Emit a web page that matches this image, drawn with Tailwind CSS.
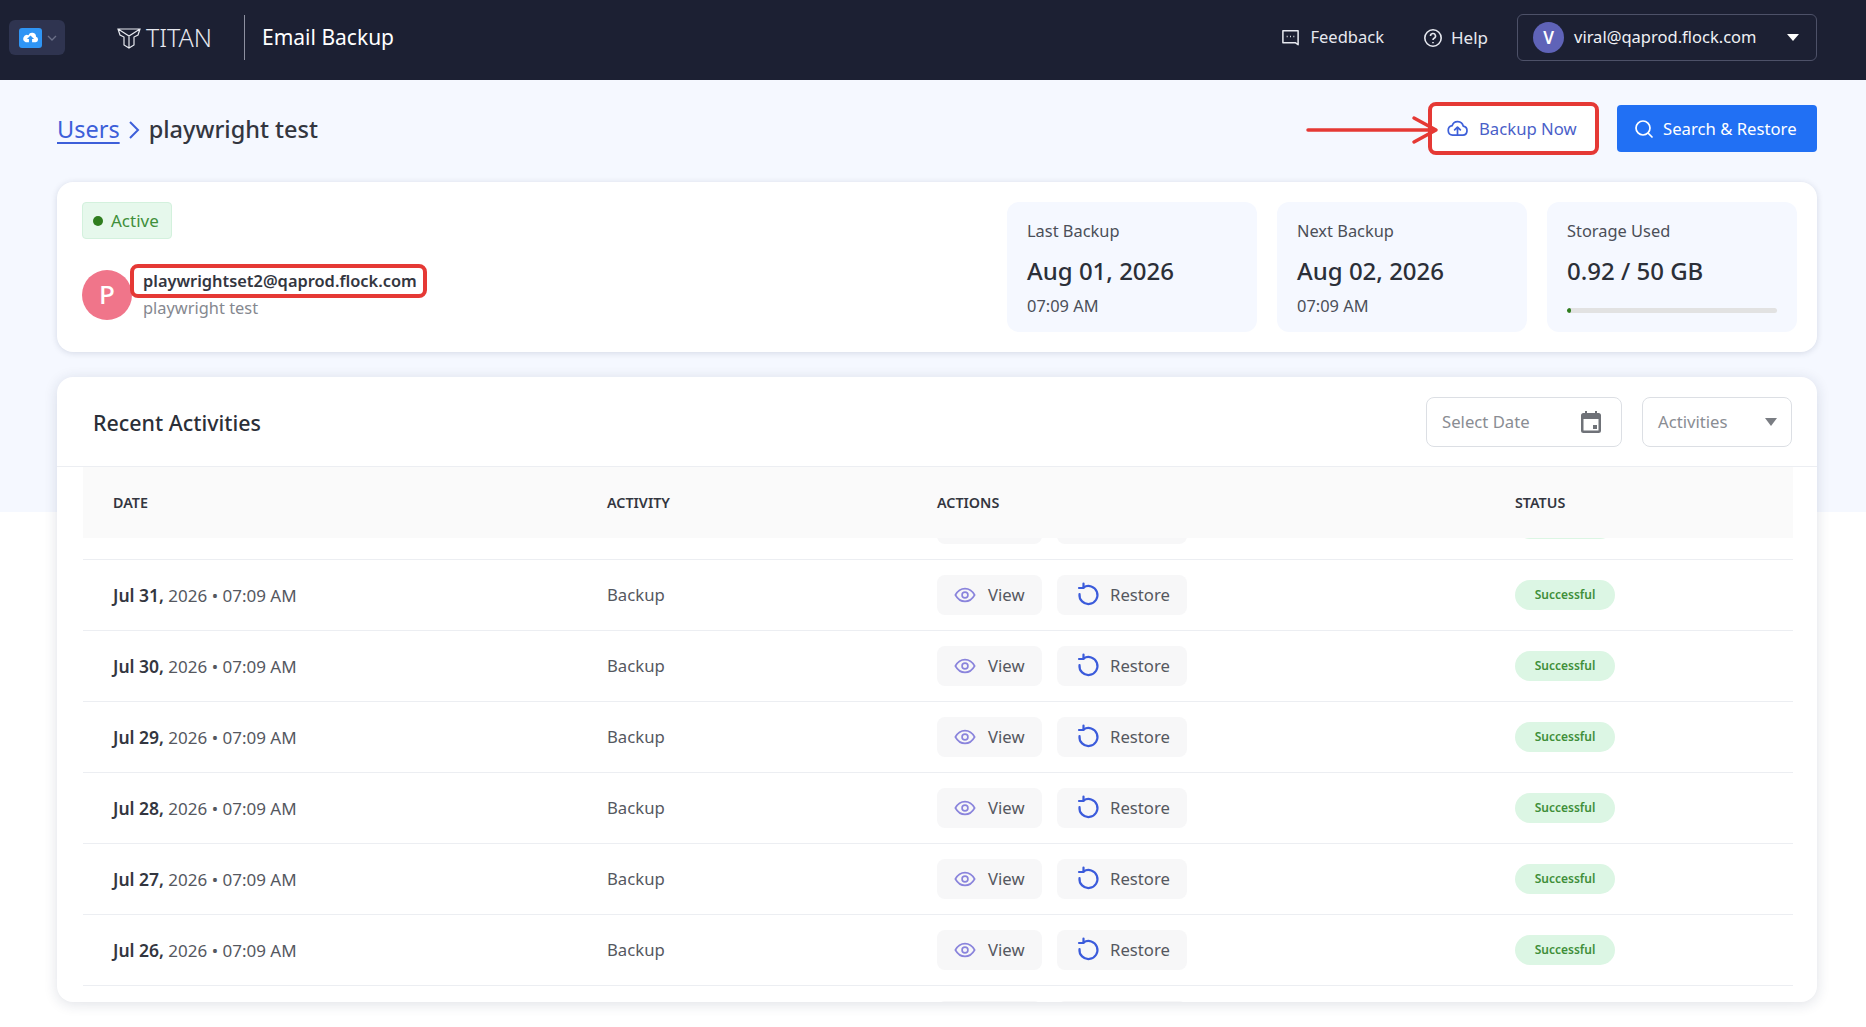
<!DOCTYPE html>
<html lang="en">
<head>
  <meta charset="UTF-8" />
  <title>Email Backup</title>
  <script src="https://cdn.jsdelivr.net/npm/@tailwindcss/browser@4"></script>
</head>
<body class="bg-white text-[#2b2f38] font-['Noto_Sans','Liberation_Sans',sans-serif] overflow-hidden">

  <!-- Header -->
  <header class="h-20 bg-[#1c2033] flex items-center pl-[9px] pr-[49px] pb-[5px] text-white">
    <div class="w-14 h-[35px] rounded-md bg-[#2f3450] flex items-center pl-2.5 gap-1">
      <div class="w-[23px] h-5 rounded-[3px] bg-[#2f95f5] flex items-center justify-center">
        <svg class="w-[19px] h-[19px]" viewBox="0 0 24 24" fill="#fff"><path d="M19 11a5 5 0 0 0-9.600-2A4.500 4.500 0 0 0 6 18h4v-4H7.500L12 9.500l4.500 4.500H14v4h4.500A3.600 3.600 0 0 0 19 11z"/></svg>
      </div>
      <svg class="w-3 h-3 text-[#6b7088]" viewBox="0 0 12 12" fill="none" stroke="currentColor" stroke-width="1.300"><path d="M2 4l4 4 4-4"/></svg>
    </div>
    <div class="ml-[52px] flex items-center gap-[5px]">
      <svg class="w-6 h-6 text-[#e6e8ef]" viewBox="0 0 24 24" fill="none" stroke="currentColor" stroke-width="1.200"><path d="M1 3h22l-2 6-4 2v8l-5 3-5-3v-8L3 9zM1 3l11 7 11-7M12 10v12"/></svg>
      <span class="text-[25px] font-light text-[#e6e8ef] leading-none">TITAN</span>
    </div>
    <div class="ml-8 w-px h-[45px] bg-[#8d90a0]"></div>
    <div class="ml-[17px] text-[21px] leading-none">Email Backup</div>

    <div class="ml-auto flex items-center text-[16.5px]">
      <svg class="w-[19px] h-[19px] mr-[11px]" viewBox="0 0 20 20" fill="none" stroke="#e6e8ef" stroke-width="1.600"><path d="M2 3h16v12.500l0 2-3-2H2z" stroke-linejoin="round"/><path d="M6 9h1M9.500 9h1M13 9h1"/></svg>
      <span class="text-[#e6e8ef]">Feedback</span>
      <svg class="w-5 h-5 ml-[39px] mr-[8px]" viewBox="0 0 20 20" fill="none" stroke="#e6e8ef" stroke-width="1.600"><circle cx="10" cy="10" r="8.200"/><path d="M7.500 8a2.500 2.500 0 1 1 3.600 2.200c-.8.400-1.100.9-1.100 1.800M10 14v1.200"/></svg>
      <span class="text-[#e6e8ef] text-[17px]">Help</span>
      <div class="ml-[29px] w-[300px] h-[47px] rounded-md border border-[#4d5168] flex items-center pl-[15px]">
        <div class="w-[31px] h-[31px] rounded-full bg-[#5f63b8] flex items-center justify-center font-semibold text-[17px]">V</div>
        <span class="ml-[10px] text-[#f0f1f5]">viral@qaprod.flock.com</span>
        <div class="ml-auto mr-[17px] w-0 h-0 border-x-[6px] border-x-transparent border-t-[7px] border-t-white"></div>
      </div>
    </div>
  </header>

  <!-- Main -->
  <main class="h-[947px] pl-[57px] pr-[49px] bg-[linear-gradient(#f5f8ff_432px,#ffffff_432px)]">

    <div class="pt-[25px] h-[102px] flex items-start">
      <div class="h-[49px] flex items-center text-[23.5px] leading-none">
        <a href="#" class="text-[#3d5fd9] underline underline-offset-4">Users</a>
        <svg class="w-3 h-5 ml-2 mr-[9px]" viewBox="0 0 12 20" fill="none" stroke="#3d5fd9" stroke-width="2"><path d="M2 2l8 8-8 8"/></svg>
        <span class="font-medium text-[#33363f]">playwright test</span>
      </div>
      <div class="ml-auto flex items-center gap-[21px] text-[16.7px]">
        <div class="relative">
          <svg class="absolute top-[10px] left-[-126px] w-[135px] h-[30px]" viewBox="0 0 135 30" fill="none" stroke="#e53935" stroke-width="3.500" stroke-linecap="round" stroke-linejoin="round"><path d="M3 15h127M109 3l22 12-22 12"/></svg>
          <button class="w-[165px] h-[47px] bg-white rounded-md flex items-center pl-[15px] gap-2.5 text-[#4a5fc9]">
            <svg class="w-[23px] h-[23px]" viewBox="0 0 24 24" fill="none" stroke="#3d5fd9" stroke-width="1.800" stroke-linecap="round" stroke-linejoin="round"><path d="M7 19a5 5 0 0 1-.6-9.900A6 6 0 0 1 18 9.500a4.800 4.800 0 0 1-.5 9.500H7z"/><path d="M12 18v-7M9 13.500l3-3 3 3"/></svg>
            Backup Now
          </button>
          <div class="absolute -inset-[3px] rounded-lg border-4 border-[#e53935]"></div>
        </div>
        <button class="w-[200px] h-[47px] bg-[#2170f4] rounded-[4px] text-white flex items-center pl-[17px] gap-[9px]">
          <svg class="w-5 h-5" viewBox="0 0 20 20" fill="none" stroke="#fff" stroke-width="1.700" stroke-linecap="round"><circle cx="9" cy="9" r="7"/><path d="M14.500 14.500L18 18"/></svg>
          Search &amp; Restore
        </button>
      </div>
    </div>

    <!-- Account card -->
    <section class="h-[170px] bg-white rounded-2xl shadow-[0_1px_6px_rgba(30,40,80,0.15)] px-5 flex items-center">
      <div class="flex-1 pl-[5px] self-start pt-5">
        <div class="w-[90px] h-[37px] rounded-[4px] bg-[#e6f8ec] border border-[#d3f1dd] flex items-center pl-[10px] gap-[8px] text-[17px] text-[#3f8f3a]">
          <span class="w-[10px] h-[10px] rounded-full bg-[#2f7d1e]"></span>Active
        </div>
        <div class="mt-[30px] flex items-center">
          <div class="w-[50px] h-[50px] rounded-full bg-[#f0758a] text-white flex items-center justify-center text-[26px] font-medium">P</div>
          <div class="ml-[11px] relative">
            <div class="relative text-[16.4px] font-semibold leading-6 text-[#33363f]">playwrightset2@qaprod.flock.com
              <div class="absolute -left-[13px] -right-[10px] -top-[5px] -bottom-[5px] rounded-lg border-4 border-[#e53935]"></div>
            </div>
            <div class="text-[16.4px] leading-6 mt-[3px] text-[#85888f]">playwright test</div>
          </div>
        </div>
      </div>
      <div class="flex gap-5">
        <div class="w-[250px] h-[130px] rounded-xl bg-[#f5f8ff] px-5 pt-[17px]">
          <div class="text-[16.4px] leading-6 text-[#4b4f58]">Last Backup</div>
          <div class="mt-[12px] text-[24px] leading-8 font-medium">Aug 01, 2026</div>
          <div class="mt-[7px] text-[16.4px] leading-6 text-[#4b4f58]">07:09 AM</div>
        </div>
        <div class="w-[250px] h-[130px] rounded-xl bg-[#f5f8ff] px-5 pt-[17px]">
          <div class="text-[16.4px] leading-6 text-[#4b4f58]">Next Backup</div>
          <div class="mt-[12px] text-[24px] leading-8 font-medium">Aug 02, 2026</div>
          <div class="mt-[7px] text-[16.4px] leading-6 text-[#4b4f58]">07:09 AM</div>
        </div>
        <div class="w-[250px] h-[130px] rounded-xl bg-[#f5f8ff] px-5 pt-[17px]">
          <div class="text-[16.4px] leading-6 text-[#4b4f58]">Storage Used</div>
          <div class="mt-[12px] text-[24px] leading-8 font-medium">0.92 / 50 GB</div>
          <div class="mt-[21px] h-[5px] rounded-full bg-[#e2e2e2] overflow-hidden">
            <div class="h-full rounded-full bg-[#2f7d1e]" style="width: 2%"></div>
          </div>
        </div>
      </div>
    </section>

    <!-- Recent activities -->
    <section class="mt-[25px] h-[625px] bg-white rounded-2xl shadow-[0_2px_14px_rgba(30,40,80,0.14)] overflow-hidden flex flex-col">
      <div class="h-[90px] shrink-0 pl-9 pr-[25px] flex items-center border-b border-[#eceef2]">
        <h2 class="pt-[3px] text-[21.4px] font-medium text-[#2b2f38]">Recent Activities</h2>
        <div class="ml-auto w-[196px] h-[50px] rounded-lg border border-[#dcdfe4] flex items-center pl-[15px] pr-[19px] text-[16.7px] text-[#8a8d93]">
          Select Date
          <svg class="ml-auto w-[22px] h-[24px]" viewBox="0 0 22 24" fill="#6f7278"><path d="M5 1h2v2h8V1h2v2h1.500A2.500 2.500 0 0 1 21 5.500v15a2.500 2.500 0 0 1-2.500 2.500h-15A2.500 2.500 0 0 1 1 20.500v-15A2.500 2.500 0 0 1 3.500 3H5zM3.500 9v11.500h15V9zM13 15h4v4h-4z" fill-rule="evenodd"/></svg>
        </div>
        <div class="ml-[20px] w-[150px] h-[50px] rounded-lg border border-[#dcdfe4] flex items-center pl-[15px] pr-[14px] text-[16.7px] text-[#8a8d93]">
          Activities
          <div class="ml-auto w-0 h-0 border-x-[6px] border-x-transparent border-t-[8px] border-t-[#7a7d83]"></div>
        </div>
      </div>

      <div class="ml-[26px] mr-6 h-[71px] shrink-0 bg-[#fafafa] pl-[30px] grid grid-cols-[494px_330px_578px_1fr] pt-[26px] text-[14.3px] font-semibold leading-5 uppercase text-[#33363f] relative z-10">
        <div>Date</div><div>Activity</div><div>Actions</div><div>Status</div>
      </div>

      <div id="rows" class="ml-[26px] mr-6 flex-1 overflow-hidden"></div>
    </section>
  </main>

  <script>
    const dates = ["Aug 01", "Jul 31", "Jul 30", "Jul 29", "Jul 28", "Jul 27", "Jul 26", "Jul 25"];

    document.getElementById("rows").innerHTML = dates.map((d, i) => `
      <div class="h-[71px] border-b border-[#eceef2] pl-[30px] grid grid-cols-[494px_330px_578px_1fr] items-center text-[16.7px] text-[#55585f] ${i === 0 ? "-mt-[49px]" : ""}">
        <div><b class="font-semibold text-[17.5px] text-[#33363f]">${d},</b> <span class="text-[17px]">2026 • 07:09 AM</span></div>
        <div>Backup</div>
        <div class="flex gap-[15px]">
          <div class="w-[105px] h-10 rounded-lg bg-[#f7f7f8] flex items-center pl-[17px] gap-[12px]">
            <svg class="w-[22px] h-[22px]" viewBox="0 0 24 24" fill="none" stroke="#8a84dc" stroke-width="1.800"><path d="M1.500 12C4 7.500 7.800 5 12 5s8 2.500 10.500 7c-2.500 4.500-6.300 7-10.500 7s-8-2.500-10.500-7z"/><circle cx="12" cy="12" r="3.200"/></svg>
            View
          </div>
          <div class="w-[130px] h-10 rounded-lg bg-[#f7f7f8] flex items-center pl-[19px] gap-[10px]">
            <svg class="w-6 h-6 -mt-0.5" viewBox="0 0 24 24" fill="none" stroke="#3b5bdb" stroke-width="2.200" stroke-linecap="round" stroke-linejoin="round"><path d="M7.500 5.500A9 9 0 1 1 3.500 12"/><path d="M7.500 1.500v4.500H3"/></svg>
            Restore
          </div>
        </div>
        <div class="-mt-[1px] w-[100px] h-[30px] rounded-full bg-[#dcf6e4] flex items-center justify-center text-[12px] font-semibold text-[#3f8f3a]">Successful</div>
      </div>`).join("");
  </script>

</body>
</html>
